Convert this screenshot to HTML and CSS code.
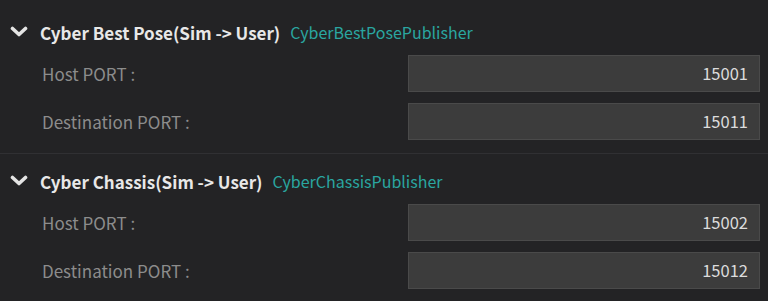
FILE: index.html
```html
<!doctype html>
<html lang="en">
  <head>
    <meta charset="UTF-8" />
    <title>Cyber Publishers</title>
    <link rel="stylesheet" href="styles.css">
  </head>
  <body>
    <div class="panel">
      <div class="section">
        <div class="section-header">
          <svg class="chevron" width="18" height="12" viewBox="0 0 18 12">
            <polyline points="2.5,2.5 9,8.5 15.5,2.5" />
          </svg>
          <span class="title">Cyber Best Pose(Sim -&gt; User)</span>
          <span class="publisher">CyberBestPosePublisher</span>
        </div>
        <div class="row">
          <label class="label">Host PORT :</label>
          <div class="field">15001</div>
        </div>
        <div class="row">
          <label class="label">Destination PORT :</label>
          <div class="field">15011</div>
        </div>
      </div>

      <div class="section">
        <div class="section-header">
          <svg class="chevron" width="18" height="12" viewBox="0 0 18 12">
            <polyline points="2.5,2.5 9,8.5 15.5,2.5" />
          </svg>
          <span class="title">Cyber Chassis(Sim -&gt; User)</span>
          <span class="publisher">CyberChassisPublisher</span>
        </div>
        <div class="row">
          <label class="label">Host PORT :</label>
          <div class="field">15002</div>
        </div>
        <div class="row">
          <label class="label">Destination PORT :</label>
          <div class="field">15012</div>
        </div>
      </div>
    </div>
  </body>
</html>
```

FILE: styles.css
```css
html,
body {
  margin: 0;
  background: #232325;
}
body {
  font-family: "Noto Sans CJK KR", "Noto Sans", sans-serif;
  padding-top: 5px;
}
.section {
  padding: 13px 0 13px;
}
.section + .section {
  border-top: 1px solid #303033;
}
.section-header {
  height: 28px;
  display: flex;
  align-items: center;
  padding-left: 10px;
}
.chevron {
  margin-right: 12px;
}
.chevron polyline {
  fill: none;
  stroke: #e4e4e4;
  stroke-width: 3.6;
  stroke-linecap: round;
  stroke-linejoin: round;
}
.title {
  color: #e8e8e8;
  font-size: 17px;
  font-weight: 700;
  margin-right: 10px;
}
.publisher {
  color: #2aa6a0;
  font-size: 16px;
}
.row {
  display: grid;
  grid-template-columns: 1fr 352px;
  align-items: center;
  padding: 0 8px 0 42px;
  margin-top: 9px;
}
.row + .row {
  margin-top: 11px;
}
.label {
  color: #8c8c8c;
  font-size: 17px;
}
.field {
  box-sizing: border-box;
  height: 37px;
  line-height: 35px;
  background: #3c3c3c;
  border: 1px solid #4a4a4a;
  color: #dcdcdc;
  font-size: 16.5px;
  text-align: right;
  padding-right: 11px;
}
```
